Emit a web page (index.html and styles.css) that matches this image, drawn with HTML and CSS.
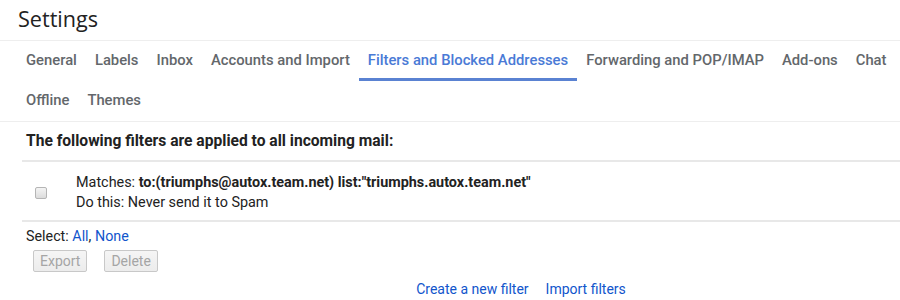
FILE: index.html
```html
<!DOCTYPE html>
<html>
<head>
<meta charset="utf-8">
<link rel="stylesheet" href="styles.css">
</head>
<body>
<div class="page">
  <div class="header"><h1 class="title">Settings</h1></div>
  <nav class="tabs">
    <span class="tab">General</span>
    <span class="tab">Labels</span>
    <span class="tab">Inbox</span>
    <span class="tab">Accounts and Import</span>
    <span class="tab active">Filters and Blocked Addresses</span>
    <span class="tab">Forwarding and POP/IMAP</span>
    <span class="tab">Add-ons</span>
    <span class="tab">Chat</span>
    <span class="tab">Offline</span>
    <span class="tab">Themes</span>
  </nav>
  <div class="content">
    <div class="heading">The following filters are applied to all incoming mail:</div>
    <div class="filter-row">
      <div class="check-cell"><span class="checkbox"></span></div>
      <div class="filter-text">
        <div>Matches: <b>to:(triumphs@autox.team.net) list:"triumphs.autox.team.net"</b></div>
        <div>Do this: Never send it to Spam</div>
      </div>
    </div>
    <div class="select">Select: <a class="link">All</a>, <a class="link">None</a></div>
    <div class="buttons">
      <span class="btn">Export</span>
      <span class="btn">Delete</span>
    </div>
    <div class="actions">
      <a class="link">Create a new filter</a>
      <a class="link">Import filters</a>
    </div>
  </div>
</div>
</body>
</html>
```
FILE: styles.css
```css
* { box-sizing: border-box; }
html, body { margin: 0; padding: 0; background: #fff; }
body { font-family: Roboto, "Liberation Sans", sans-serif; color: #222; }
.header {
  height: 41px;
  border-bottom: 1px solid #eeeeee;
  padding-left: 18px;
}
.title {
  margin: 0;
  font-family: "Open Sans", Roboto, sans-serif;
  font-weight: 400;
  font-size: 21.6px;
  line-height: 38px;
  color: #222;
}
.tabs {
  display: flex;
  flex-wrap: wrap;
  padding-left: 17px;
  border-bottom: 1px solid #eeeeee;
}
.tab {
  height: 40px;
  line-height: 39px;
  padding: 0 9px;
  font-family: Roboto, "Open Sans", sans-serif;
  font-size: 14.8px;
  font-weight: 500;
  color: #63676b;
  border-bottom: 3px solid transparent;
  white-space: nowrap;
}
.tab.active {
  color: #4a7ad6;
  border-bottom-color: #5a82d2;
}
.content {
  margin-left: 22px;
}
.heading {
  font-size: 15.6px;
  font-weight: 700;
  padding: 9px 4px 0;
  height: 40px;
  line-height: 20px;
  border-bottom: 2px solid #e8e8e8;
}
.filter-row {
  display: flex;
  align-items: center;
  height: 60px;
  border-bottom: 2px solid #e8e8e8;
  font-size: 14.4px;
  color: #222;
}
.check-cell {
  width: 54px;
  padding-left: 13px;
  padding-top: 3px;
}
.checkbox {
  display: block;
  width: 12px;
  height: 12px;
  border: 1px solid #b5b5b5;
  border-radius: 2px;
  background: linear-gradient(#f4f4f4, #dcdcdc);
}
.filter-text {
  line-height: 20px;
  padding-top: 4px;
}
.filter-text b { font-weight: 700; }
.select {
  font-size: 14.3px;
  padding: 5px 4px 0;
  line-height: 18px;
}
.link { color: #15c; text-decoration: none; }
.buttons {
  display: flex;
  gap: 17px;
  padding: 5px 0 0 11px;
}
.btn {
  display: inline-block;
  height: 22px;
  line-height: 20px;
  padding: 0 6px;
  font-size: 14px;
  color: #a5a5a5;
  border: 1px solid #c8c8c8;
  border-radius: 2px;
  background: linear-gradient(#f5f5f5, #ececec);
}
.actions {
  display: flex;
  justify-content: center;
  gap: 17px;
  padding: 8px 0 0 142px;
  margin-left: -22px;
  font-size: 14px;
  line-height: 19px;
}
```
